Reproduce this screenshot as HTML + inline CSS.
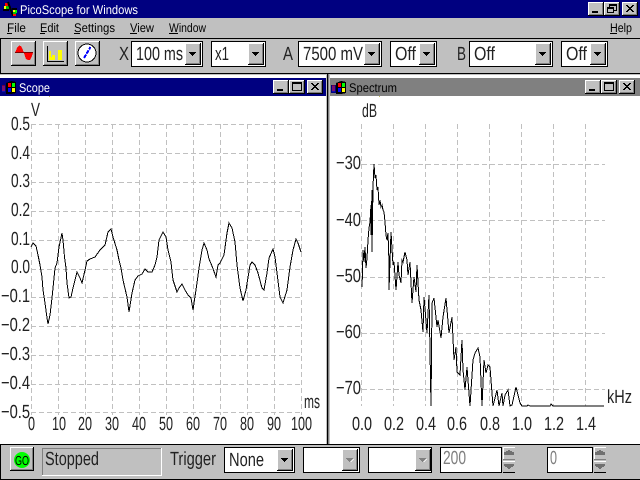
<!DOCTYPE html>
<html><head><meta charset="utf-8"><title>PicoScope for Windows</title>
<style>
html,body{margin:0;padding:0;background:#fff;width:640px;height:480px;overflow:hidden}
svg{display:block}
text{font-family:"Liberation Sans",sans-serif;fill:#000;text-rendering:geometricPrecision}
.s{font-size:12.5px}
.b{font-size:19px;fill:#222}
.w{fill:#fff}
.b.g{fill:#808080}
</style></head><body>
<svg width="640" height="480" viewBox="0 0 640 480" xmlns="http://www.w3.org/2000/svg">
<defs>
<g id="tb" shape-rendering="crispEdges"><rect width="16" height="14" fill="#000"/><rect width="15" height="13" fill="#fff"/><rect x="1" y="1" width="14" height="12" fill="#808080"/><rect x="1" y="1" width="13" height="11" fill="#c0c0c0"/></g>
<g id="min" shape-rendering="crispEdges"><use href="#tb"/><rect x="4" y="9" width="6" height="2" fill="#000"/></g>
<g id="max" shape-rendering="crispEdges"><use href="#tb"/><path d="M3 2.5H12.5V10.5H3.5V2.5M3.5 3.5H12.5" fill="none" stroke="#000"/></g>
<g id="cls" shape-rendering="crispEdges"><use href="#tb"/><path d="M4 3h2v1h1v1h2v-1h1v-1h2v1h-1v1h-1v1h-1v1h1v1h1v1h1v1h-2v-1h-1v-1h-2v1h-1v1h-2v-1h1v-1h1v-1h1v-1h-1v-1h-1v-1h-1z" fill="#000"/></g>
<g id="dd" shape-rendering="crispEdges"><rect width="16" height="22" fill="#000"/><rect width="15" height="21" fill="#fff"/><rect x="1" y="1" width="14" height="20" fill="#808080"/><rect x="1" y="1" width="13" height="19" fill="#c0c0c0"/><path d="M4 9h7v1h-1v1h-1v1h-1v1h-1v-1h-1v-1h-1v-1h-1z" fill="#000"/></g>
<g id="ddg" shape-rendering="crispEdges"><rect width="16" height="22" fill="#000"/><rect width="15" height="21" fill="#fff"/><rect x="1" y="1" width="14" height="20" fill="#808080"/><rect x="1" y="1" width="13" height="19" fill="#c0c0c0"/><path d="M4 9h7v1h-1v1h-1v1h-1v1h-1v-1h-1v-1h-1v-1h-1z" fill="#808080"/><path d="M11 10l-3 3h1l3-3z" fill="#fff"/></g>
<g id="spin" shape-rendering="crispEdges"><rect width="12" height="13" fill="#c0c0c0"/><path d="M0 0.5H12M0.5 0V13" stroke="#fff" fill="none"/><path d="M0 12.5H12" stroke="#808080"/><path d="M5 3h2v1h2v1h2v3h-10v-3h2v-1h2z" fill="#707070"/><rect y="14" width="12" height="12" fill="#c0c0c0"/><path d="M0 14.5H12" stroke="#fff"/><path d="M0 25.5H12" stroke="#000"/><path d="M1 17h10v2h-1v1h-2v1h-1v1h-2v-1h-1v-1h-2v-1h-1z" fill="#707070"/></g>
<g id="flag" shape-rendering="crispEdges"><rect x="0" y="5" width="5" height="8" fill="#000080"/><path d="M1 6h3M1 8h3M1 10h3" stroke="#d00000"/><path d="M1 7h3M1 9h3M1 11h3" stroke="#2020e0"/><path d="M5 3L10 1L15 2V13L10 14L5 14Z" fill="#000"/><rect x="7" y="3" width="3" height="4" fill="#ff0000"/><rect x="11" y="3" width="3" height="4" fill="#00ff00"/><rect x="7" y="8" width="3" height="4" fill="#0000ff"/><rect x="11" y="8" width="3" height="4" fill="#ffff00"/></g>
</defs>

<rect width="640" height="480" fill="#fff"/>
<g shape-rendering="crispEdges">
<rect width="640" height="18" fill="#000080"/>
<rect y="18" width="640" height="20" fill="#c0c0c0"/>
<rect y="38" width="640" height="36" fill="#c0c0c0"/>
<path d="M0 38.5H640M0 73.5H640M0.5 38V74" stroke="#000" fill="none"/>
<rect y="74" width="640" height="4" fill="#fff"/>
<rect y="74" width="640" height="1" fill="#c0c0c0"/>
<rect y="78" width="326" height="18" fill="#000080"/>
<rect x="330" y="78" width="310" height="18" fill="#808080"/>
<rect x="326" y="74" width="1" height="370" fill="#c0c0c0"/>
<rect x="327" y="74" width="1" height="370" fill="#000"/>
<rect x="328" y="74" width="1" height="370" fill="#808080"/>
<rect x="329" y="74" width="1" height="370" fill="#c0c0c0"/>
<rect x="49" y="96" width="1" height="1" fill="#c8c060"/>
<rect x="379" y="96" width="1" height="1" fill="#c8c060"/>
</g>

<!-- app icon -->
<g shape-rendering="crispEdges">
<rect x="5" y="3" width="3" height="3" fill="#ff0000"/><rect x="4" y="6" width="2" height="3" fill="#ffff00"/><rect x="6" y="6" width="3" height="3" fill="#00c000"/><rect x="3" y="9" width="6" height="2" fill="#000"/>
<path d="M8 2L12 13L13 16" fill="none" stroke="#000" stroke-width="2"/>
<rect x="12" y="8" width="5" height="2" fill="#000"/><rect x="13" y="10" width="2" height="2" fill="#ffff00"/><rect x="15" y="10" width="2" height="3" fill="#00ff00"/><rect x="13" y="12" width="3" height="2" fill="#00c000"/><rect x="13" y="14" width="3" height="2" fill="#ff0000"/>
</g>
<text x="20" y="14" class="s w" textLength="118" lengthAdjust="spacingAndGlyphs">PicoScope for Windows</text>
<use href="#min" x="588" y="2"/>
<g transform="translate(604,2)"><use href="#tb"/><path d="M5.5 5.5V2.5H12.5V8.5H9.5M3.5 5.5H9.5V10.5H3.5ZM3.5 6.5H9.5M5.5 3.5H12.5" fill="none" stroke="#000" shape-rendering="crispEdges"/></g>
<use href="#cls" x="622" y="2"/>

<!-- menu -->
<text x="7" y="32" class="s" textLength="19" lengthAdjust="spacingAndGlyphs">File</text>
<text x="40" y="32" class="s" textLength="19" lengthAdjust="spacingAndGlyphs">Edit</text>
<text x="74" y="32" class="s" textLength="41" lengthAdjust="spacingAndGlyphs">Settings</text>
<text x="130" y="32" class="s" textLength="24" lengthAdjust="spacingAndGlyphs">View</text>
<text x="169" y="32" class="s" textLength="37" lengthAdjust="spacingAndGlyphs">Window</text>
<text x="610" y="32" class="s" textLength="22" lengthAdjust="spacingAndGlyphs">Help</text>
<path d="M7 33.5H12M40 33.5H45M74 33.5H80M130 33.5H137M169 33.5H178M610 33.5H617" stroke="#000" shape-rendering="crispEdges"/>

<!-- toolbar buttons -->
<g shape-rendering="crispEdges">
<rect x="11" y="41" width="25" height="25" fill="#000"/><rect x="11" y="41" width="24" height="24" fill="#fff"/><rect x="12" y="42" width="23" height="23" fill="#808080"/><rect x="12" y="42" width="22" height="22" fill="#c0c0c0"/>
<rect x="43" y="41" width="25" height="25" fill="#000"/><rect x="43" y="41" width="24" height="24" fill="#fff"/><rect x="44" y="42" width="23" height="23" fill="#808080"/><rect x="44" y="42" width="22" height="22" fill="#c0c0c0"/>
<rect x="75" y="41" width="25" height="25" fill="#000"/><rect x="75" y="41" width="24" height="24" fill="#fff"/><rect x="76" y="42" width="23" height="23" fill="#808080"/><rect x="76" y="42" width="22" height="22" fill="#c0c0c0"/>
<path d="M15 53L17 48L19 45.500L21 46L23 50L24 53L26 59L28 60L30 60L32 56L33 53Z" fill="#ff0000"/>
<path d="M15 52.500H33" stroke="#800000"/>
<path d="M47.500 46V61.500H64" fill="none" stroke="#000"/>
<path d="M49 51h2v6h1v-2h3v5h-6zM58 50h4v10h-4z" fill="#ffff00"/>
<circle cx="87" cy="53" r="9" fill="#fff" stroke="#000"/>
<path d="M84 58L90.500 47" stroke="#0000ff" stroke-width="2" stroke-dasharray="4 1"/>
</g>

<!-- combos -->
<g shape-rendering="crispEdges" fill="#fff" stroke="#000">
<rect x="131.500" y="41.500" width="71" height="25"/>
<rect x="211.500" y="41.500" width="54" height="25"/>
<rect x="298.500" y="41.500" width="83" height="25"/>
<rect x="390.500" y="41.500" width="46" height="25"/>
<rect x="469.500" y="41.500" width="83" height="25"/>
<rect x="561.500" y="41.500" width="46" height="25"/>
</g>
<use href="#dd" x="185" y="43"/><use href="#dd" x="248" y="43"/><use href="#dd" x="364" y="43"/><use href="#dd" x="419" y="43"/><use href="#dd" x="535" y="43"/><use href="#dd" x="590" y="43"/>
<text x="119" y="60" class="b" textLength="10" lengthAdjust="spacingAndGlyphs">X</text>
<text x="136" y="60" class="b" textLength="47" lengthAdjust="spacingAndGlyphs">100 ms</text>
<text x="215" y="60" class="b" textLength="14" lengthAdjust="spacingAndGlyphs">x1</text>
<text x="283" y="60" class="b" textLength="10" lengthAdjust="spacingAndGlyphs">A</text>
<text x="303" y="60" class="b" textLength="60" lengthAdjust="spacingAndGlyphs">7500 mV</text>
<text x="395" y="60" class="b" textLength="21" lengthAdjust="spacingAndGlyphs">Off</text>
<text x="457" y="60" class="b" textLength="9" lengthAdjust="spacingAndGlyphs">B</text>
<text x="474" y="60" class="b" textLength="21" lengthAdjust="spacingAndGlyphs">Off</text>
<text x="566" y="60" class="b" textLength="21" lengthAdjust="spacingAndGlyphs">Off</text>

<!-- child title bars -->
<use href="#flag" x="1" y="80"/>
<text x="19" y="92" class="s w" textLength="31" lengthAdjust="spacingAndGlyphs">Scope</text>
<use href="#min" x="273" y="80"/><use href="#max" x="289" y="80"/><use href="#cls" x="307" y="80"/>
<use href="#flag" x="331" y="80"/>
<text x="349" y="92" class="s" textLength="48" lengthAdjust="spacingAndGlyphs">Spectrum</text>
<use href="#min" x="585" y="80"/><use href="#max" x="601" y="80"/><use href="#cls" x="619" y="80"/>

<!-- scope grid -->
<path shape-rendering="crispEdges" fill="none" stroke="#c0c0c0" stroke-dasharray="5 3" d="M31.500 124V415M58.500 124V415M85.500 124V415M112.500 124V415M139.500 124V415M166.500 124V415M193.500 124V415M220.500 124V415M247.500 124V415M274.500 124V415M301.500 124V415M31 124.500H302M31 153.500H302M31 182.500H302M31 211.500H302M31 240.500H302M31 269.500H302M31 297.500H302M31 326.500H302M31 355.500H302M31 384.500H302M31 412.500H302"/>
<polyline shape-rendering="crispEdges" fill="none" stroke="#000" points="31,247 33,243 36,246 38,255 40,265 42,277 43,290 45,303 47,318 48,324 50,315 52,298 55,268 57,263 59,247 62,233 63,240 64.500,257 66,268 67,283 69,298 71,297 73,288 77,272 80,278 82,283 85,270 87,261 90,259 95,257 100,250 105,245 108,232 111,229 113,237 117,250 119,260 121,268 123,280 127,297 129,312 132,293 135,280 138,276 142,274 145,269 148,272 152,272 155,265 157,257 159,240 163,232 166,237 168,250 171,262 173,280 177,292 179,288 182,284 185,290 188,295 191,298 193,310 197,283 199,268 202,250 204,243 207,250 209,259 212,266 216,277 218,265 220,263 224,255 227,233 229,223 232,228 235,242 237,265 240,288 243,301 246,290 250,265 252,262 255,265 258,273 262,288 264,290 267,273 269,258 273,249 275,257 276,265 280,297 283,303 287,290 290,267 293,250 296,239 298,243 301,252"/>

<!-- scope labels -->
<text x="31" y="116" class="b" textLength="9" lengthAdjust="spacingAndGlyphs">V</text>
<text x="11" y="130" class="b" textLength="19" lengthAdjust="spacingAndGlyphs">0.5</text>
<text x="11" y="159" class="b" textLength="19" lengthAdjust="spacingAndGlyphs">0.4</text>
<text x="11" y="187" class="b" textLength="19" lengthAdjust="spacingAndGlyphs">0.3</text>
<text x="11" y="216" class="b" textLength="19" lengthAdjust="spacingAndGlyphs">0.2</text>
<text x="11" y="245" class="b" textLength="19" lengthAdjust="spacingAndGlyphs">0.1</text>
<text x="11" y="273" class="b" textLength="19" lengthAdjust="spacingAndGlyphs">0.0</text>
<text x="1" y="302" class="b" textLength="29" lengthAdjust="spacingAndGlyphs">−0.1</text>
<text x="1" y="331" class="b" textLength="29" lengthAdjust="spacingAndGlyphs">−0.2</text>
<text x="1" y="360" class="b" textLength="29" lengthAdjust="spacingAndGlyphs">−0.3</text>
<text x="1" y="389" class="b" textLength="29" lengthAdjust="spacingAndGlyphs">−0.4</text>
<text x="1" y="418" class="b" textLength="29" lengthAdjust="spacingAndGlyphs">−0.5</text>
<text x="28" y="430" class="b" textLength="7" lengthAdjust="spacingAndGlyphs">0</text>
<text x="52" y="430" class="b" textLength="14" lengthAdjust="spacingAndGlyphs">10</text>
<text x="78" y="430" class="b" textLength="14" lengthAdjust="spacingAndGlyphs">20</text>
<text x="105" y="430" class="b" textLength="14" lengthAdjust="spacingAndGlyphs">30</text>
<text x="132" y="430" class="b" textLength="14" lengthAdjust="spacingAndGlyphs">40</text>
<text x="159" y="430" class="b" textLength="14" lengthAdjust="spacingAndGlyphs">50</text>
<text x="186" y="430" class="b" textLength="14" lengthAdjust="spacingAndGlyphs">60</text>
<text x="213" y="430" class="b" textLength="14" lengthAdjust="spacingAndGlyphs">70</text>
<text x="240" y="430" class="b" textLength="14" lengthAdjust="spacingAndGlyphs">80</text>
<text x="267" y="430" class="b" textLength="14" lengthAdjust="spacingAndGlyphs">90</text>
<text x="291" y="430" class="b" textLength="21" lengthAdjust="spacingAndGlyphs">100</text>
<text x="304" y="408" class="b" textLength="16" lengthAdjust="spacingAndGlyphs">ms</text>

<!-- spectrum grid -->
<path shape-rendering="crispEdges" fill="none" stroke="#c0c0c0" stroke-dasharray="5 3" d="M361.500 124V406M393.500 124V406M425.500 124V406M457.500 124V406M489.500 124V406M521.500 124V406M553.500 124V406M585.500 124V406M362 164.500H605M362 220.500H605M362 277.500H605M362 333.500H605M362 389.500H605"/>
<polyline shape-rendering="crispEdges" fill="none" stroke="#000" points="362,287 362.500,272 363,250 364,262 365,247 366,268 367,258 368,240 369,228 370,222 371,205 371,235 372,190 372,252 373,187 374,164 375,178 376,175 377,190 378,187 379,205 380,200 381,207 382,205 383,210 384,212 385,222 386,235 387,240 388,233 389,263 389,290 391,232 393,265 394,262 396,290 398,262 399,275 401,283 402,260 403,262 405,252 407,260 408,275 410,262 412,303 414,277 416,292 417,265 419,300 421,310 423,332 424,297 427,333 429,295 431,406 432,303 434,298 437,327 438,320 441,338 443,317 446,298 449,333 452,317 454,360 456,347 457,372 460,375 462,340 463,370 465,390 467,367 470,406 473,360 475,353 478,348 480,357 482,406 484,360 486,373 488,365 490,367 493,406 497,390 499,406 502,393 503,406 505,395 508,390 510,406 512,405 516,387 520,403 522,406 527,406 528,405 530,406 550,406 551,404 553,406 604,406"/>

<!-- spectrum labels -->
<text x="362" y="117" class="b" textLength="15" lengthAdjust="spacingAndGlyphs">dB</text>
<text x="336" y="169" class="b" textLength="25" lengthAdjust="spacingAndGlyphs">−30</text>
<text x="336" y="226" class="b" textLength="25" lengthAdjust="spacingAndGlyphs">−40</text>
<text x="336" y="282" class="b" textLength="25" lengthAdjust="spacingAndGlyphs">−50</text>
<text x="336" y="338" class="b" textLength="25" lengthAdjust="spacingAndGlyphs">−60</text>
<text x="336" y="394" class="b" textLength="25" lengthAdjust="spacingAndGlyphs">−70</text>
<text x="352" y="430" class="b" textLength="20" lengthAdjust="spacingAndGlyphs">0.0</text>
<text x="384" y="430" class="b" textLength="20" lengthAdjust="spacingAndGlyphs">0.2</text>
<text x="416" y="430" class="b" textLength="20" lengthAdjust="spacingAndGlyphs">0.4</text>
<text x="447" y="430" class="b" textLength="20" lengthAdjust="spacingAndGlyphs">0.6</text>
<text x="480" y="430" class="b" textLength="20" lengthAdjust="spacingAndGlyphs">0.8</text>
<text x="512" y="430" class="b" textLength="20" lengthAdjust="spacingAndGlyphs">1.0</text>
<text x="544" y="430" class="b" textLength="20" lengthAdjust="spacingAndGlyphs">1.2</text>
<text x="576" y="430" class="b" textLength="20" lengthAdjust="spacingAndGlyphs">1.4</text>
<text x="607" y="403" class="b" textLength="25" lengthAdjust="spacingAndGlyphs">kHz</text>

<!-- status bar -->
<g shape-rendering="crispEdges">
<rect y="444" width="640" height="36" fill="#c0c0c0"/>
<path d="M0 444.500H640M0 479.500H640M0.500 444V480" stroke="#000" fill="none"/>
<rect x="10" y="447" width="24" height="24" fill="#000"/><rect x="10" y="447" width="23" height="23" fill="#fff"/><rect x="11" y="448" width="22" height="22" fill="#808080"/><rect x="11" y="448" width="21" height="21" fill="#c0c0c0"/>
<rect x="42" y="448" width="120" height="28" fill="#fff"/><rect x="42" y="448" width="119" height="27" fill="#808080"/><rect x="43" y="449" width="118" height="26" fill="#c0c0c0"/>
<g fill="#fff" stroke="#000">
<rect x="224.500" y="447.500" width="70" height="25"/>
<rect x="303.500" y="447.500" width="56" height="25"/>
<rect x="368.500" y="447.500" width="63" height="25"/>
<rect x="440.500" y="447.500" width="61" height="25"/>
<rect x="547.500" y="447.500" width="45" height="25"/>
</g>
</g>
<circle cx="22" cy="460" r="8" fill="#00ff00"/>
<text x="15" y="465" style="font-size:13px" textLength="14" lengthAdjust="spacingAndGlyphs">GO</text>
<text x="45" y="465" class="b" textLength="54" lengthAdjust="spacingAndGlyphs">Stopped</text>
<text x="170" y="465" class="b" textLength="46" lengthAdjust="spacingAndGlyphs">Trigger</text>
<text x="229" y="466" class="b" textLength="35" lengthAdjust="spacingAndGlyphs">None</text>
<use href="#dd" x="277" y="449"/>
<use href="#ddg" x="342" y="449"/>
<use href="#ddg" x="415" y="449"/>
<text x="443" y="464" class="b g" textLength="23" lengthAdjust="spacingAndGlyphs">200</text>
<text x="550" y="464" class="b g" textLength="7" lengthAdjust="spacingAndGlyphs">0</text>
<use href="#spin" x="503" y="447"/>
<use href="#spin" x="594" y="447"/>
</svg>
</body></html>
